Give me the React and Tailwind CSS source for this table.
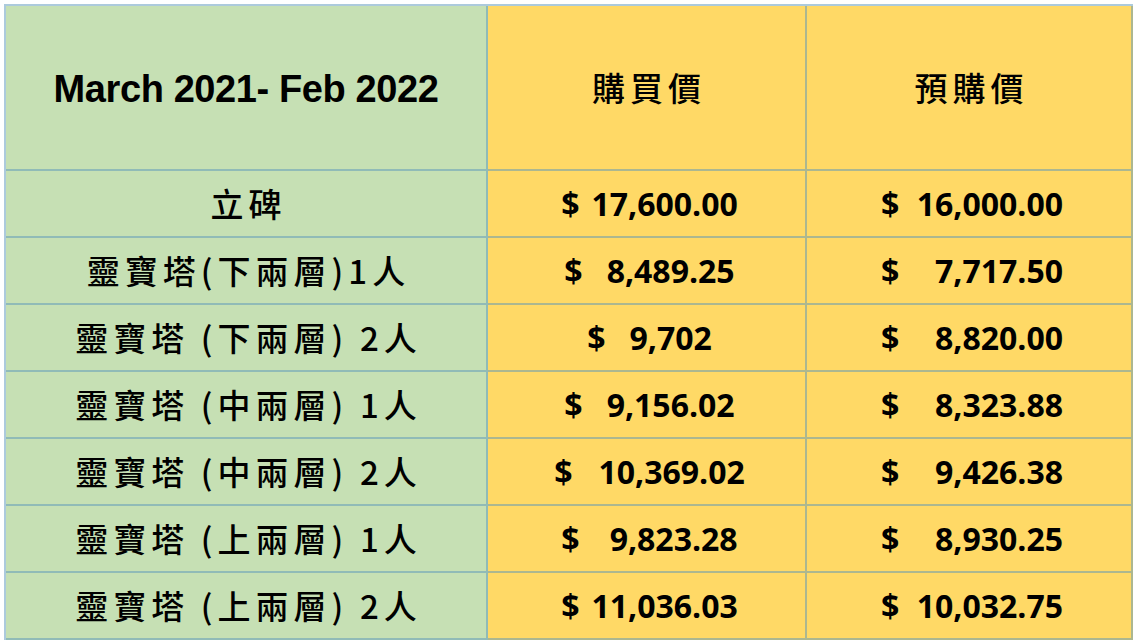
import React from 'react'

const rows = [
  { label: '立碑', buyGap: 12, buy: '17,600.00', pre: '16,000.00' },
  { label: '靈寶塔(下兩層)1人', buyGap: 24, buy: '8,489.25', pre: '7,717.50' },
  { label: '靈寶塔 (下兩層) 2人', buyGap: 24, buy: '9,702', pre: '8,820.00' },
  { label: '靈寶塔 (中兩層) 1人', buyGap: 24, buy: '9,156.02', pre: '8,323.88' },
  { label: '靈寶塔 (中兩層) 2人', buyGap: 26, buy: '10,369.02', pre: '9,426.38' },
  { label: '靈寶塔 (上兩層) 1人', buyGap: 30, buy: '9,823.28', pre: '8,930.25' },
  { label: '靈寶塔 (上兩層) 2人', buyGap: 12, buy: '11,036.03', pre: '10,032.75' },
]

const line = 'border-[rgba(90,150,185,0.5)]'
const cjk = { fontFamily: '"Noto Sans CJK TC", "Noto Sans", sans-serif' }
const num = { fontFamily: '"Open Sans", "Liberation Sans", sans-serif' }

function App() {
  return (
    <div className="min-h-screen bg-white pt-[4px] pl-[4px]">
      <div className={`grid w-fit grid-cols-[482px_319px_326px] border-t-2 border-l-2 ${line}`}>
        {/* header */}
        <div className={`h-[165px] flex items-center justify-center bg-[#c6e0b4] border-r-2 border-b-2 ${line}`}>
          <span className="text-[38px] font-bold text-black pt-[3px] tracking-[-0.4px]" style={{ fontFamily: '"Liberation Sans", Arial, sans-serif' }}>
            March 2021- Feb 2022
          </span>
        </div>
        <div className={`h-[165px] flex items-center justify-center bg-[#ffd966] border-r-2 border-b-2 ${line}`}>
          <span className="text-[33px] font-medium tracking-[5px] text-black pl-[5px]" style={cjk}>購買價</span>
        </div>
        <div className={`h-[165px] flex items-center justify-center bg-[#ffd966] border-r-2 border-b-2 ${line}`}>
          <span className="text-[33px] font-medium tracking-[5px] text-black pl-[5px]" style={cjk}>預購價</span>
        </div>

        {rows.map((r) => (
          <React.Fragment key={r.label}>
            <div className={`h-[67px] flex items-center justify-center bg-[#c6e0b4] border-r-2 border-b-2 ${line}`}>
              <span className="text-[33px] font-medium tracking-[5px] text-black whitespace-pre pl-[5px]" style={cjk}>
                {r.label.replace(/ /g, '\u2009')}
              </span>
            </div>
            <div className={`h-[67px] flex items-center justify-center bg-[#ffd966] border-r-2 border-b-2 ${line}`}>
              <div className="flex items-center text-[32px] font-bold text-black pl-[6px]" style={num}>
                <span>$</span>
                <span style={{ marginLeft: r.buyGap }}>{r.buy}</span>
              </div>
            </div>
            <div className={`h-[67px] flex items-center justify-center bg-[#ffd966] border-r-2 border-b-2 ${line}`}>
              <div className="flex w-[182px] items-center justify-between text-[32px] font-bold text-black ml-[6px]" style={num}>
                <span>$</span>
                <span>{r.pre}</span>
              </div>
            </div>
          </React.Fragment>
        ))}
      </div>
    </div>
  )
}

export default App
